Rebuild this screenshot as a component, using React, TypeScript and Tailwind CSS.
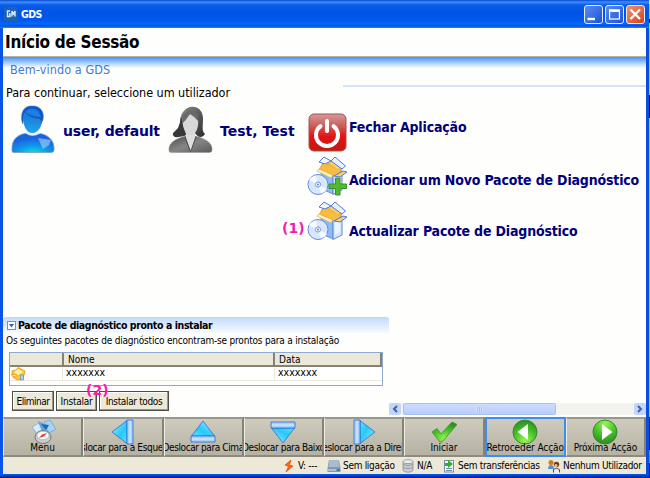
import React from "react";

const tahoma = "font-['DejaVu_Sans_Condensed','DejaVu_Sans',sans-serif] [font-stretch:condensed]";
const verdana = "font-['DejaVu_Sans',sans-serif] [font-stretch:normal]";

function GmLogo() {
  return (
    <svg className="h-[14px] w-[14px]" viewBox="0 0 14 14">
      <rect width="14" height="14" fill="#1c62b4" />
      <path d="M6 4H3.5V9.5H6V7H5M8 9.5V4L9.5 7L11 4V9.5" fill="none" stroke="#dcecff" strokeWidth="1.4" />
    </svg>
  );
}

function WindowButton({ kind }: { kind: "min" | "max" | "close" }) {
  return (
    <div className={`h-[19px] w-[19px] rounded-[3px] border border-[#e6eefc] ${kind === "close" ? "bg-linear-to-br from-[#f09070] to-[#d83c0c]" : "bg-linear-to-br from-[#5a8cf0] to-[#1c50d8]"}`}>
      <svg className="h-[17px] w-[17px]" viewBox="0 0 17 17" fill="none" stroke="#fff">
        {kind === "min" && <path d="M2.5 13H10" strokeWidth="2.4" />}
        {kind === "max" && (
          <>
            <rect x="3.6" y="4" width="9.8" height="9" strokeWidth="1.2" />
            <path d="M3 4.7H14" strokeWidth="2.4" />
          </>
        )}
        {kind === "close" && <path d="M3.5 3.5L13 13M13 3.5L3.5 13" strokeWidth="2.3" />}
      </svg>
    </div>
  );
}

function MaleUser() {
  return (
    <svg className="h-[50px] w-[44px] shrink-0" viewBox="0 0 44 50">
      <defs>
        <radialGradient id="mb" cx=".5" cy="1" r=".75">
          <stop offset="0" stopColor="#0cdcd8" />
          <stop offset=".5" stopColor="#1094ec" />
          <stop offset="1" stopColor="#1a62e0" />
        </radialGradient>
        <linearGradient id="mf" x2="0" y2="1">
          <stop offset="0" stopColor="#1470d8" />
          <stop offset="1" stopColor="#22a4e8" />
        </linearGradient>
      </defs>
      <path d="M1 46V43C1 36 5 30 14 28.500H29C38 30 43 36 43 43V45Q43 47.500 40 47.500H3Q1 47.500 1 46Z" fill="url(#mb)" stroke="#7ea0b0" strokeWidth=".8" />
      <path d="M27 33L40 35L38 40L32 44Z" fill="#8cc4f4" opacity=".75" />
      <path d="M15 28.500Q21 33 29 28.500L27 24H16Z" fill="#e4f2fa" />
      <path d="M12 12C12 3 30 3 31 13C32 21 27 28 21.500 28C15 28 12 20 12 12Z" fill="url(#mf)" />
      <path d="M11.500 19C8 7 14 0 21 1C29 0 34 7 32 15L30 19C30 15 29 14 27 14C22 14 16 10 13.500 8C12 12 13 16 11.500 19Z" fill="#1058cc" stroke="#5f83a4" strokeWidth=".5" />
      <path d="M14 7Q20 1 27 6L30 12Q21 12 14 7Z" fill="#1a80e6" />
    </svg>
  );
}

function FemaleUser() {
  return (
    <svg className="h-[50px] w-[45px] shrink-0" viewBox="0 0 45 50">
      <defs>
        <linearGradient id="fb" x2="1" y2="1">
          <stop offset="0" stopColor="#4c4c4c" />
          <stop offset=".5" stopColor="#858585" />
          <stop offset="1" stopColor="#5c5c5c" />
        </linearGradient>
        <linearGradient id="fh" x2="1" y2="1">
          <stop offset="0" stopColor="#8c8c8c" />
          <stop offset="1" stopColor="#2c2c2c" />
        </linearGradient>
      </defs>
      <path d="M11 31C13 26 10 13 15 7C20 0 30 0 34 8C37 16 32 25 37 29C34 34 29 32 27 28L17 26Q20 33 11 31Z" fill="url(#fh)" />
      <path d="M11 32Q4 33 5 28L10 23Q12 19 13 12L18 30Z" fill="#383838" />
      <path d="M1 46V43Q2 35 18 31H27Q43 35 44 43V45Q44 47.500 41 47.500H4Q1 47.500 1 46Z" fill="url(#fb)" stroke="#909090" strokeWidth=".5" />
      <path d="M18 24H27V33L23 47L18 33Z" fill="#dedede" />
      <path d="M14.500 17C14 8 29 6 30 14C31 22 28 30 23 30C18 30 15 24 14.500 17Z" fill="#d8d8d8" />
      <path d="M14 19Q18 15 22 9Q27 12 30 16Q31 5 22 5Q14 7 14 19Z" fill="#6a6a6a" />
      <path d="M17 32L22.500 47L28 32" fill="none" stroke="#4c4c4c" />
    </svg>
  );
}

function PowerIcon() {
  return (
    <svg className="h-[39px] w-[39px] shrink-0" viewBox="0 0 39 39">
      <defs>
        <linearGradient id="pw" x2="0" y2="1">
          <stop offset="0" stopColor="#d49a9a" />
          <stop offset=".35" stopColor="#cc5854" />
          <stop offset=".6" stopColor="#e21414" />
          <stop offset="1" stopColor="#c41810" />
        </linearGradient>
      </defs>
      <rect x="1" y="1" width="37" height="37" rx="5" fill="url(#pw)" stroke="#a85048" />
      <path d="M12.500 13.200A11 11 0 1 0 25.500 13.200" fill="none" stroke="#fff" strokeWidth="4" strokeLinecap="round" />
      <path d="M19 8V18" stroke="#fff" strokeWidth="4" strokeLinecap="round" />
    </svg>
  );
}

function PackageIcon({ plus = false }: { plus?: boolean }) {
  return (
    <svg className="h-[41px] w-[41px] shrink-0" viewBox="0 0 41 41">
      <path d="M14 13L26 19V38L15 33Z" fill="#8abdf5" stroke="#6c8ce0" />
      <path d="M26 19L35 15V34L26 38.500Z" fill="#d4e8fc" stroke="#6484d8" />
      <path d="M28 22L33 19V31L28 34Z" fill="#eef7ff" opacity=".8" />
      <path d="M12 14L17 5L37 9L33 16L26 19Z" fill="#f3b636" stroke="#b88a3c" strokeWidth=".7" />
      <path d="M19 5L25 4L37 10L31 13Z" fill="#fbd170" />
      <path d="M12 6L17 1L24 5L18 8Z" fill="#f1f7ff" stroke="#5078dc" />
      <path d="M24 5L28 1L38.500 10L35 13Z" fill="#e8f2ff" stroke="#5078dc" />
      <path d="M17 8L34 15L29 20L12 13Z" fill="#f6bd42" />
      <path d="M12 13L26 19L24 22L10 15Z" fill="#fff0b8" stroke="#d49a30" strokeWidth=".5" />
      <path d="M27 20L36 15L40 16L33 21Z" fill="#f7cf78" stroke="#5078dc" />
      <circle cx="11" cy="28.500" r="10" fill="#d7e8fd" stroke="#6489e0" />
      <path d="M11 28.500L2 24A10 10 0 0 1 9 19.500ZM11 28.500L20 33A10 10 0 0 1 14 37.500Z" fill="#f7fbff" />
      <circle cx="11" cy="28.500" r="2.600" fill="#f9fcff" stroke="#7597d8" />
      <circle cx="11" cy="28.500" r="1" fill="#557fb8" />
      {plus && <path d="M28.500 22H33V28H39.500V32.500H33V39H28.500V32.500H22V28H28.500Z" fill="#55b832" stroke="#3a9028" />}
    </svg>
  );
}

function ToolIcon({ kind }: { kind: string }) {
  return (
    <svg className="h-[26px] w-[26px] shrink-0" viewBox="0 0 26 26">
      <defs>
        <linearGradient id="ar" x2="1" y2="1">
          <stop offset="0" stopColor="#9ceeff" />
          <stop offset=".6" stopColor="#28c8fa" />
          <stop offset="1" stopColor="#5ae4ff" />
        </linearGradient>
        <radialGradient id="gr" cx=".5" cy=".85" r=".85">
          <stop offset="0" stopColor="#96f850" />
          <stop offset=".55" stopColor="#45c028" />
          <stop offset="1" stopColor="#2c8c20" />
        </radialGradient>
      </defs>
      {kind === "menu" && (
        <>
          <path d="M2 8L9 4L14 13L8 16Z" fill="#d8ecfa" stroke="#7ba8cf" strokeWidth=".7" />
          <path d="M8 2L13 4L18 15L12 13Z" fill="#5ba6e5" />
          <path d="M14 3L20 1L26 10L19 14Z" fill="#a6d3f5" stroke="#669fce" strokeWidth=".7" />
          <path d="M11 5L19 6L16 11Z" fill="#1669b8" />
          <ellipse cx="13" cy="18" rx="8" ry="6.500" fill="#c9cdd0" stroke="#74797e" />
          <ellipse cx="13" cy="16.500" rx="6" ry="4.300" fill="#fafafa" stroke="#9a9ea0" strokeWidth=".6" />
          <path d="M9 19L12 15.500L17 14L14 17.500Z" fill="#e34632" />
        </>
      )}
      {["left", "up", "down", "right"].includes(kind) && (
        <g transform={kind === "left" ? undefined : kind === "up" ? "rotate(90 13 13)" : kind === "down" ? "rotate(-90 13 13)" : "rotate(180 13 13)"} stroke="#2d6bd0" strokeLinejoin="round">
          <path d="M2 13L17 1.500V24.500Z" fill="url(#ar)" strokeWidth=".8" />
          <path d="M17 1H23V25H17Z" fill="#a9d0fa" strokeWidth=".8" />
          <path d="M20 2V24" stroke="#dcefff" />
        </g>
      )}
      {kind === "check" && (
        <path d="M1 13L6 9.500L10 15L21 3L26 5.500L11 23H9Z" fill="url(#gr)" stroke="#3a9428" strokeWidth=".8" strokeLinejoin="round" />
      )}
      {(kind === "back" || kind === "next") && (
        <g transform={kind === "next" ? "rotate(180 13 13)" : undefined}>
          <circle cx="13" cy="13" r="12" fill="url(#gr)" stroke="#3a8830" />
          <path d="M5.500 13L16 5V21Z" fill="#fff" />
        </g>
      )}
    </svg>
  );
}

const tools = [
  { kind: "menu", label: "Menu", track: "" },
  { kind: "left", label: "Deslocar para a Esquerda", track: "tracking-[-0.35px]" },
  { kind: "up", label: "Deslocar para Cima", track: "tracking-[-0.4px]" },
  { kind: "down", label: "Deslocar para Baixo", track: "tracking-[-0.4px]" },
  { kind: "right", label: "Deslocar para a Direita", track: "tracking-[-0.35px]" },
  { kind: "check", label: "Iniciar", track: "tracking-[-0.1px]" },
  { kind: "back", label: "Retroceder Acção", track: "tracking-[-0.1px]" },
  { kind: "next", label: "Próxima Acção", track: "tracking-[-0.2px]" },
];

function StatusIcon({ kind }: { kind: string }) {
  return (
    <svg className="h-[14px] w-[14px] shrink-0" viewBox="0 0 14 14">
      {kind === "bolt" && <path d="M9 1L3 6L6.500 7.500L4 13L11 7L7.500 5.800Z" fill="#f46b16" stroke="#e34713" strokeWidth=".7" />}
      {kind === "disk" && (
        <>
          <path d="M2 1H12L13.500 9V13H.5V9Z" fill="#7f99b4" />
          <path d="M2.500 1H11.500L12.500 8H1.500Z" fill="#aabdd0" />
          <path d="M1 11H9" stroke="#d8e6f3" />
          <path d="M10 11H13" stroke="#2d6fcc" strokeWidth="1.500" />
        </>
      )}
      {kind === "db" && (
        <g fill="#c9ced4" stroke="#858d97" strokeWidth=".8">
          <path d="M2 2.500V11.500Q7 15 12 11.500V2.500Z" />
          <path d="M2 5.500Q7 8 12 5.500M2 8.500Q7 11 12 8.500" fill="none" />
          <ellipse cx="7" cy="2.700" rx="5" ry="2" fill="#edf0f3" />
        </g>
      )}
      {kind === "transfer" && (
        <>
          <rect x="2.500" y="1.500" width="9" height="11.500" fill="#eef4f8" stroke="#7890a8" />
          <path d="M4 9.500H10M4 11.500H10" stroke="#6d89a6" />
          <path d="M3 4H6V1L11 5L6 9V7H3Z" fill="#35ad27" />
        </>
      )}
      {kind === "users" && (
        <>
          <circle cx="4" cy="3.500" r="2.500" fill="#c97e1e" />
          <path d="M1 10Q1 6 4 6T7 10" fill="#608ed4" />
          <circle cx="9.500" cy="5.500" r="2.700" fill="#6e3d16" />
          <circle cx="9" cy="6.500" r="1.500" fill="#f2c499" />
          <path d="M6.500 13.500V10.500Q9.500 8 12.500 10.500V13.500" fill="#e8edf5" stroke="#4c4a50" />
        </>
      )}
    </svg>
  );
}

function Status({ kind, label, className }: { kind: string; label: string; className: string }) {
  return (
    <div className={`flex shrink-0 items-center ${className}`}>
      <StatusIcon kind={kind} />
      <span className="ml-[2px] whitespace-pre">{label}</span>
    </div>
  );
}

function HeadCell({ children, className }: { children?: React.ReactNode; className: string }) {
  return (
    <div className={`h-full border-r-2 border-b-2 border-r-[#858273] border-b-[#858273] bg-[#ebe8d9] pl-1 text-[10px] leading-[14px] ${className}`}>{children}</div>
  );
}

function Button({ children, className }: { children: React.ReactNode; className: string }) {
  return (
    <div className={`flex h-[20px] shrink-0 items-center justify-center border border-[#4e4d46] bg-[#ece9d8] whitespace-nowrap shadow-[inset_-1px_-1px_0_#99968a,inset_1px_1px_0_#fff] ${className}`}>{children}</div>
  );
}

export default function App() {
  return (
    <div className={`relative flex h-[478px] w-[650px] overflow-hidden bg-[#0755e8] text-black ${tahoma}`}>
      <div className="flex min-w-0 flex-1 flex-col">
        <header className="flex h-[28px] shrink-0 items-center bg-[linear-gradient(#0a46d0_0,#3c90ff_2px,#0a5ce8_5px,#0054e4_13px,#0058ec_20px,#0068ff_24px,#0050d8_26px,#3c84ec_28px)] pr-[4px] pl-[4px]">
          <GmLogo />
          <span className="ml-[3px] flex-1 text-[10.5px] leading-none font-bold tracking-[-0.6px] text-white">GDS</span>
          <div className="flex gap-[2px]">
            <WindowButton kind="min" />
            <WindowButton kind="max" />
            <WindowButton kind="close" />
          </div>
        </header>

        <div className="flex min-h-0 flex-1 border-r-[3px] border-l-[3px] border-r-[#0a4cdc] border-l-[#0855e8]">
          <div className="flex min-w-0 flex-1 flex-col bg-[#fefefd]">
            <h1 className="h-[28px] shrink-0 pl-[2px] text-[17px] leading-[29px] font-bold tracking-[-0.3px]">Início de Sessão</h1>
            <div className="h-[12px] shrink-0 border-t border-[#b8b0a0] bg-linear-to-b from-[#3c92fa] to-[#fefefd]" />

            <div className="flex h-[249px] shrink-0">
              <section className="w-[302px] shrink-0">
                <p className="mt-[-5px] pl-[7px] text-[12.5px] leading-[14px] tracking-[0.1px] text-[#4478d0]">Bem-vindo a GDS</p>
                <p className="mt-[9px] pl-[3px] text-[12.5px] leading-[14px] tracking-[-0.04px] whitespace-nowrap">Para continuar, seleccione um utilizador</p>
                <div className={`mt-[5px] flex pl-[8px] text-[14px] font-bold text-[#000078] ${verdana}`}>
                  <MaleUser />
                  <span className="mt-[16px] ml-[8px] w-[98px] shrink-0 leading-[20px] tracking-[-0.2px] whitespace-nowrap">user, default</span>
                  <span className="ml-[7px]"><FemaleUser /></span>
                  <span className="mt-[16px] ml-[7px] leading-[20px] whitespace-nowrap">Test, Test</span>
                </div>
              </section>
              <section className="min-w-0 flex-1 pt-[17px] text-[14px] font-bold tracking-[-0.17px] whitespace-nowrap text-[#000078]">
                <div className="ml-[38px] h-[2px] bg-[#d2e4fb]" />
                <div className="mt-[26px] flex h-[39px] items-start pl-[3px]">
                  <PowerIcon />
                  <span className="mt-[4px] ml-[2px] leading-[20px]">Fechar Aplicação</span>
                </div>
                <div className="mt-[4px] flex h-[41px] items-start pl-[2px]">
                  <PackageIcon plus />
                  <span className="mt-[14px] ml-px leading-[20px]">Adicionar um Novo Pacote de Diagnóstico</span>
                </div>
                <div className="mt-[4px] flex h-[41px] items-start pl-[2px]">
                  <PackageIcon />
                  <span className="mt-[20px] ml-px leading-[20px]">Actualizar Pacote de Diagnóstico</span>
                </div>
              </section>
            </div>

            <div className="flex h-[100px] shrink-0">
              <section className="w-[386px] shrink-0 text-[10px]">
                <div className="flex h-[16px] items-center rounded-t-[3px] border-t border-[#c0d4f0] bg-linear-to-b from-[#c5dcfc] to-[#f7fbff] pl-[4px]">
                  <svg className="h-[9px] w-[9px]" viewBox="0 0 9 9">
                    <rect x=".5" y=".5" width="8" height="8" fill="#fff" stroke="#8090ac" />
                    <path d="M2 3H7L4.500 6.500Z" fill="#1864d0" />
                  </svg>
                  <span className="mt-px ml-[2px] text-[10.5px] font-bold tracking-[-0.41px] whitespace-nowrap">Pacote de diagnóstico pronto a instalar</span>
                </div>
                <p className="mt-px h-[18px] pl-[3px] leading-[13px] tracking-[-0.2px] whitespace-nowrap">Os seguintes pacotes de diagnóstico encontram-se prontos para a instalação</p>
                <div className="ml-[6px] h-[34px] w-[374px] border border-[#8ea9d0] bg-white">
                  <div className="flex h-[14px]">
                    <HeadCell className="w-[54px]" />
                    <HeadCell className="w-[211px]">Nome</HeadCell>
                    <HeadCell className="flex-1">Data</HeadCell>
                  </div>
                  <div className="flex h-[14px] border-b border-[#ece9dc] text-[10.5px] leading-[10px]">
                    <div className="w-[53px] border-r border-[#ece9dc]">
                      <svg className="ml-px h-[14px] w-[15px]" viewBox="0 0 15 14">
                        <path d="M1 4L5 3L7 .5L14 4L12 12L6 13L2 10Z" fill="#fac83c" stroke="#e6a22e" />
                        <path d="M3 5L7 2L12 5L7 8Z" fill="#fff0a8" />
                        <path d="M0 7L6 8L5 10L1 9Z" fill="#ffde70" stroke="#dc901e" strokeWidth=".5" />
                        <rect x="9.500" y="8" width="3" height="5" fill="#b4d0ec" stroke="#6d8ab0" strokeWidth=".7" />
                      </svg>
                    </div>
                    <div className="w-[212px] border-r border-[#ece9dc] pl-[3px]">xxxxxxx</div>
                    <div className="pl-[3px]">xxxxxxx</div>
                  </div>
                </div>
                <div className="mt-[5px] flex gap-[2px] pl-[9px]">
                  <Button className="w-[42px] tracking-[-0.5px]">Eliminar</Button>
                  <Button className="w-[41px] tracking-[-0.25px]">Instalar</Button>
                  <Button className="w-[70px] tracking-[-0.35px]">Instalar todos</Button>
                </div>
              </section>
              <div className="flex min-w-0 flex-1 items-end pb-[2px]">
                <div className="flex h-[12px] flex-1 bg-[#f2f2ef]">
                  <div className="flex w-[12px] items-center justify-center rounded-[2px] bg-[#c4d5fc]"><svg className="h-[8px] w-[6px]" viewBox="0 0 6 8"><path d="M5 1L2 4L5 7" fill="none" stroke="#41629c" strokeWidth="2" /></svg></div>
                  <div className="ml-[2px] flex w-[153px] items-center justify-center rounded-[2px] border border-[#a9c2f2] bg-linear-to-b from-[#cbdcff] to-[#b9cdfa]"><span className="h-[5px] w-[7px] bg-[repeating-linear-gradient(90deg,#d4e0fc_0_1px,#abbfec_1px_2px)]" /></div>
                  <div className="ml-auto flex w-[12px] items-center justify-center rounded-[2px] bg-[#c4d5fc]"><svg className="h-[8px] w-[6px]" viewBox="0 0 6 8"><path d="M1 1L4 4L1 7" fill="none" stroke="#41629c" strokeWidth="2" /></svg></div>
                </div>
              </div>
            </div>

            <nav className="flex h-[40px] shrink-0 bg-[#aaa79a]">
              {tools.map((tool) => (
                <div
                  key={tool.kind}
                  className={`flex min-w-0 flex-1 flex-col items-center overflow-hidden bg-linear-to-b from-[#cfccbf] to-[#b5b2a3] ${tool.kind === "back" ? "border-2 border-[#3d8df0]" : "border-t-2 border-r-2 border-b-2 border-l border-t-[#9a978b] border-r-[#858276] border-b-[#8e8b7e] border-l-[#eeece2]"}`}
                >
                  <ToolIcon kind={tool.kind} />
                  <span className={`mt-[-3px] text-[10px] leading-[12px] whitespace-nowrap ${tool.track}`}>{tool.label}</span>
                </div>
              ))}
            </nav>

            <footer className="flex h-[17px] shrink-0 items-center bg-[#ece9d8] pt-px text-[10px] leading-none tracking-[-0.3px]">
              <Status kind="bolt" label="V: ---" className="ml-[279px] w-[45px]" />
              <Status kind="disk" label="Sem ligação" className="w-[74px]" />
              <Status kind="db" label="N/A" className="w-[41px]" />
              <Status kind="transfer" label="Sem transferências" className="w-[105px]" />
              <Status kind="users" label="Nenhum Utilizador" className="" />
            </footer>
          </div>
        </div>
        <div className="h-[4px] shrink-0 bg-linear-to-b from-[#0c5cf0] to-[#001c9c]" />
      </div>
      <div className="w-px shrink-0 bg-[linear-gradient(#e4dfc8_0_4px,#b4b8d8_4px_19px,#10103c_19px_23px,#b4b8d8_23px_95px,#08083c_95px_118px,#b4b8d8_118px_417px,#1c1c90_417px_450px,#58a838_450px_463px,#1c1c90_463px)]" />

      <span className={`absolute top-[220px] left-[282px] text-[14px] leading-[17px] font-bold text-[#f41cb0] ${verdana}`}>(1)</span>
      <span className={`absolute top-[382px] left-[86px] text-[14px] leading-[17px] font-bold text-[#f41cb0] ${verdana}`}>(2)</span>
    </div>
  );
}
